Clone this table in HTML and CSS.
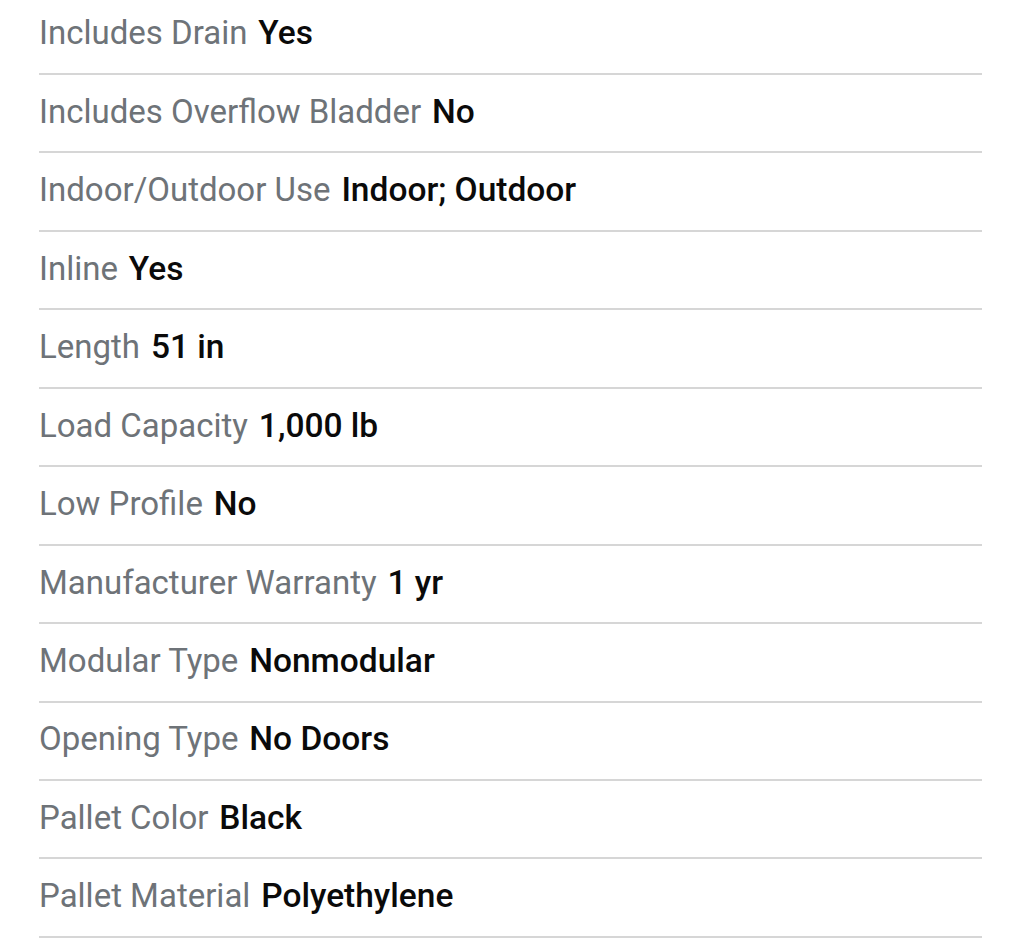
FILE: index.html
```html
<!DOCTYPE html>
<html lang="en">
<head>
<meta charset="utf-8">
<link rel="stylesheet" href="styles.css">
</head>
<body>
<ul class="specs">
  <li class="spec"><span class="label">Includes Drain</span><span class="value">Yes</span></li>
  <li class="spec"><span class="label">Includes Overflow Bladder</span><span class="value">No</span></li>
  <li class="spec"><span class="label">Indoor/Outdoor Use</span><span class="value">Indoor; Outdoor</span></li>
  <li class="spec"><span class="label">Inline</span><span class="value">Yes</span></li>
  <li class="spec"><span class="label">Length</span><span class="value">51 in</span></li>
  <li class="spec"><span class="label">Load Capacity</span><span class="value">1,000 lb</span></li>
  <li class="spec"><span class="label">Low Profile</span><span class="value">No</span></li>
  <li class="spec"><span class="label">Manufacturer Warranty</span><span class="value">1 yr</span></li>
  <li class="spec"><span class="label">Modular Type</span><span class="value">Nonmodular</span></li>
  <li class="spec"><span class="label">Opening Type</span><span class="value">No Doors</span></li>
  <li class="spec"><span class="label">Pallet Color</span><span class="value">Black</span></li>
  <li class="spec"><span class="label">Pallet Material</span><span class="value">Polyethylene</span></li>
</ul>
</body>
</html>
```

FILE: styles.css
```css
html, body {
  margin: 0;
  padding: 0;
  background: #ffffff;
}
body {
  font-family: Roboto, "Liberation Sans", sans-serif;
  overflow: hidden;
}
.specs {
  list-style: none;
  margin: -3.45px 38px 0 39px;
  padding: 0;
}
.spec {
  box-sizing: border-box;
  height: 78.45px;
  display: flex;
  align-items: center;
  gap: 0.33em;
  white-space: nowrap;
  border-bottom: 2px solid #d6d6d6;
  font-size: 33px;
  padding-bottom: 3.6px;
}
.label {
  color: #6e7378;
  font-weight: 400;
}
.value {
  color: #0a0a0a;
  font-weight: 500;
  font-size: 33.5px;
}
```
